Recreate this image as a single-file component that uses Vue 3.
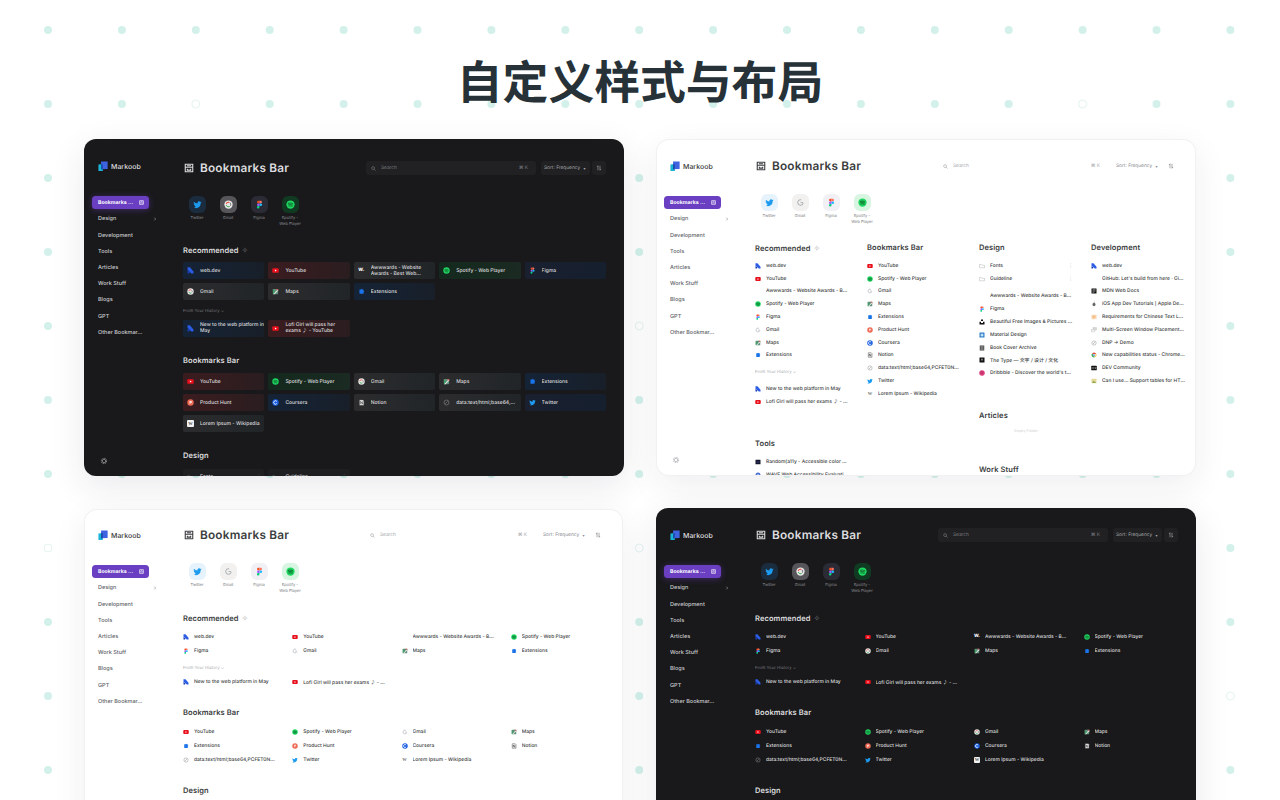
<script setup>
const W = 'Awwwards - Website Awards - Best Web Design Inspiration'
const it = {
  web: { i: 'web', t: 'web.dev', c: 'blue' },
  yt: { i: 'yt', t: 'YouTube', c: 'red' },
  aww: { i: 'aww', t: W, c: 'grey', two: true },
  spot: { i: 'spot', t: 'Spotify - Web Player', c: 'green' },
  fig: { i: 'fig', t: 'Figma', c: 'navy' },
  gmail: { i: 'gmail', t: 'Gmail', c: 'grey' },
  maps: { i: 'maps', t: 'Maps', c: 'grey' },
  ext: { i: 'ext', t: 'Extensions', c: 'blue' },
  ph: { i: 'ph', t: 'Product Hunt', c: 'red' },
  cou: { i: 'cou', t: 'Coursera', c: 'blue' },
  not: { i: 'not', t: 'Notion', c: 'grey' },
  data: { i: 'data', t: 'data:text/html;base64,PCFET0NUWVBFIGh0bWw+', c: 'grey' },
  tw: { i: 'tw', t: 'Twitter', c: 'navy' },
  wiki: { i: 'wiki', t: 'Lorem Ipsum - Wikipedia', c: 'grey' },
  nw: { i: 'web', t: 'New to the web platform in May', c: 'blue', two: true },
  lofi: { i: 'yt', t: 'Lofi Girl will pass her exams ♪ - YouTube', c: 'red', two: true },
  fonts: { i: 'folder', t: 'Fonts', more: true, c: 'plain' },
  guide: { i: 'folder', t: 'Guideline', more: true, c: 'plain' }
}
const s = (i, t) => ({ i, t })
const recItems = [it.web, it.yt, it.aww, it.spot, it.fig, it.gmail, it.maps, it.ext]
const barItems = [it.yt, it.spot, it.gmail, it.maps, it.ext, it.ph, it.cou, it.not, it.data, it.tw, it.wiki]
const hist = [it.nw, it.lofi]
const flow = [
  { title: 'Recommended', spark: true, items: recItems, hist },
  { title: 'Bookmarks Bar', items: barItems },
  { title: 'Design', items: [it.fonts, it.guide] }
]
const columns = [
  [
    { title: 'Recommended', spark: true, items: recItems, hist },
    { title: 'Tools', items: [s('rand', 'Random(a11y - Accessible color generator'), s('wave', 'WAVE Web Accessibility Evaluation Tool')] }
  ],
  [{ title: 'Bookmarks Bar', items: barItems }],
  [
    {
      title: 'Design',
      items: [it.fonts, { ...it.guide, sep: true }, s('aww', W), s('fig', 'Figma'), s('uns', 'Beautiful Free Images & Pictures | Unsplash'), s('mat', 'Material Design'), s('book', 'Book Cover Archive'), s('type', 'The Type — 文字 / 设计 / 文化'), s('dri', "Dribbble - Discover the world's top designers")]
    },
    { title: 'Articles', empty: true, items: [] },
    { title: 'Work Stuff', items: [] }
  ],
  [
    {
      title: 'Development',
      items: [s('web', 'web.dev'), s('blank', "GitHub: Let's build from here · GitHub"), s('mdn', 'MDN Web Docs'), s('ios', 'iOS App Dev Tutorials | Apple Developer'), s('req', 'Requirements for Chinese Text Layout'), s('multi', 'Multi-Screen Window Placement API'), s('data', 'DNP → Demo'), s('chr', 'New capabilities status - Chrome Developers'), s('dev', 'DEV Community'), s('can', 'Can I use... Support tables for HTML5')]
    }
  ]
]
const nav = ['Design', 'Development', 'Tools', 'Articles', 'Work Stuff', 'Blogs', 'GPT', 'Other Bookmar…']
const sites = [
  { i: 'tw', t: 'Twitter', c: 'st-tw' },
  { i: 'gmail', t: 'Gmail', c: 'st-gm' },
  { i: 'fig', t: 'Figma', c: 'st-fg' },
  { i: 'spot', t: 'Spotify - Web Player', c: 'st-sp' }
]
const cards = [
  { id: 'c1', theme: 'dark', mode: 'tile' },
  { id: 'c2', theme: 'light', mode: 'cols' },
  { id: 'c3', theme: 'light', mode: 'list' },
  { id: 'c4', theme: 'dark', mode: 'list' }
]
const icon = (name, theme) => (theme === 'dark' && name === 'gmail' ? '#gmail-d' : `#${name}`)
const isGlyph = (name) => name === 'aww' || name === 'wiki'
const glyphText = (name, theme) => {
  if (name === 'wiki') return 'W'
  return theme === 'dark' ? 'W.' : ''
}
const rings = ['2,1', '14,1', '8,4', '0,7', '8,7', '16,9']
const dots = []
for (let r = 0; r < 11; r++) {
  for (let c = 0; c < 17; c++) {
    dots.push({ x: 48 + c * 73.9, y: 30 + r * 74, ring: rings.includes(`${c},${r}`) })
  }
}
</script>

<template>
  <div class="page">
    <svg class="dots" width="1280" height="800" aria-hidden="true">
      <circle v-for="(d, n) in dots" :key="n" :cx="d.x" :cy="d.y" r="4" :class="d.ring ? 'ring' : 'dot'" />
    </svg>

    <svg class="defs" aria-hidden="true">
      <symbol id="logo" viewBox="0 0 24 24">
        <path d="M1 8l10-1v16H1z" fill="#19b4d6" />
        <path d="M7 1h15v17l-15 1z" fill="#3f63e0" />
        <path d="M7 7.400l4-.4v12l-4 .2z" fill="#164fa8" />
      </symbol>
      <symbol id="blank" viewBox="0 0 24 24"></symbol>
      <symbol id="web" viewBox="0 0 24 24">
        <path d="M2 1h8l12 14v7h-7L2 9z" fill="#2a5ce6" />
        <path d="M2 12l8 4-2 6H2z" fill="#1a3fb5" />
      </symbol>
      <symbol id="yt" viewBox="0 0 24 24">
        <rect x="1" y="4" width="22" height="16" rx="4" fill="#e8101c" />
        <path d="M10 8.500v7l6-3.500z" fill="#fff" />
      </symbol>
      <symbol id="spot" viewBox="0 0 24 24">
        <circle cx="12" cy="12" r="11" fill="#1ed760" />
        <path d="M6 9c4-1.300 8-1 12 1M7 12.500c3.500-1 7-.7 10 1M8 16c2.500-.7 5.500-.5 8 .8" fill="none" stroke="#0b3a1c" stroke-width="1.800" stroke-linecap="round" />
      </symbol>
      <symbol id="fig" viewBox="0 0 24 24">
        <path d="M12 2H9a3.500 3.500 0 0 0 0 7h3z" fill="#f24e1e" />
        <path d="M12 2h3a3.500 3.500 0 0 1 0 7h-3z" fill="#ff7262" />
        <path d="M12 9H9a3.500 3.500 0 0 0 0 7h3z" fill="#a259ff" />
        <circle cx="15.500" cy="12.500" r="3.500" fill="#1abcfe" />
        <path d="M9 16h3v3.500A3.500 3.500 0 1 1 9 16z" fill="#0acf83" />
      </symbol>
      <symbol id="gmail" viewBox="0 0 24 24">
        <circle cx="12" cy="12" r="7.500" fill="none" stroke="#9aa0a6" stroke-width="2" stroke-dasharray="35 12" transform="rotate(10 12 12)" />
        <path d="M12 12h7" stroke="#9aa0a6" stroke-width="2" />
      </symbol>
      <symbol id="gmail-d" viewBox="0 0 24 24">
        <circle cx="12" cy="12" r="11" fill="#e8e8e8" />
        <circle cx="12" cy="12" r="6" fill="none" stroke="#ea4335" stroke-width="2.500" stroke-dasharray="10 28" transform="rotate(190 12 12)" />
        <circle cx="12" cy="12" r="6" fill="none" stroke="#34a853" stroke-width="2.500" stroke-dasharray="10 28" transform="rotate(60 12 12)" />
        <circle cx="12" cy="12" r="6" fill="none" stroke="#777" stroke-width="2.500" stroke-dasharray="8 30" transform="rotate(-50 12 12)" />
      </symbol>
      <symbol id="maps" viewBox="0 0 24 24">
        <rect x="3" y="3" width="18" height="18" rx="2" fill="#5f8f7a" />
        <path d="M3 21L21 3v6L9 21z" fill="#d9dde0" />
        <path d="M13 3h8v6z" fill="#d9534a" />
        <path d="M3 5l8 8-8 8z" fill="#3f9f63" />
      </symbol>
      <symbol id="ext" viewBox="0 0 24 24">
        <path d="M5 5h6c0-3 4-3 4 0h4v5c3 0 3 4 0 4v6H5z" fill="#1a73e8" />
      </symbol>
      <symbol id="ph" viewBox="0 0 24 24">
        <circle cx="12" cy="12" r="11" fill="#ef6a55" />
        <path d="M9 7h4.500a3.200 3.200 0 0 1 0 6.400H11.200V17H9zM11.200 9v2.400h2.200a1.200 1.200 0 0 0 0-2.400z" fill="#fff" />
      </symbol>
      <symbol id="cou" viewBox="0 0 24 24">
        <circle cx="12" cy="12" r="11" fill="#1a5fe0" />
        <path d="M16.500 8.200a6 6 0 1 0 0 7.600" fill="none" stroke="#fff" stroke-width="3" />
      </symbol>
      <symbol id="not" viewBox="0 0 24 24">
        <path d="M5 3h12l3 3v15H5z" fill="#f2f2f2" stroke="#555" stroke-width="2" />
        <path d="M9 8v9M15 8v9M9 8l6 9" stroke="#333" stroke-width="2" fill="none" />
      </symbol>
      <symbol id="data" viewBox="0 0 24 24">
        <circle cx="12" cy="12" r="8.500" fill="none" stroke="#8a8d91" stroke-width="2" />
        <path d="M8 16l8-8" stroke="#8a8d91" stroke-width="2" />
      </symbol>
      <symbol id="tw" viewBox="0 0 24 24">
        <path d="M23 5.900c-.8.400-1.700.600-2.600.700a4.500 4.500 0 0 0 2-2.500c-.9.500-1.900.900-2.900 1.100a4.500 4.500 0 0 0-7.700 4.100A12.800 12.800 0 0 1 2.500 4.600a4.500 4.500 0 0 0 1.400 6c-.7 0-1.400-.2-2-.6v.1a4.500 4.500 0 0 0 3.600 4.400c-.7.200-1.400.2-2 .1a4.500 4.500 0 0 0 4.200 3.100A9 9 0 0 1 1 19.600a12.800 12.800 0 0 0 19.700-11.300c.9-.6 1.700-1.400 2.300-2.400z" fill="#1d9bf0" />
      </symbol>
      <symbol id="folder" viewBox="0 0 24 24">
        <path d="M2 6h7l2 3h11v10H2z" fill="none" stroke="currentColor" stroke-width="1.800" />
      </symbol>
      <symbol id="rand" viewBox="0 0 24 24">
        <rect x="2" y="3" width="20" height="18" rx="1" fill="#14162b" />
        <path d="M6 12h12" stroke="#5566cc" stroke-width="2" />
      </symbol>
      <symbol id="wave" viewBox="0 0 24 24">
        <circle cx="12" cy="12" r="10" fill="#4a6fd0" />
        <circle cx="12" cy="12" r="4.500" fill="#a9bdf0" />
      </symbol>
      <symbol id="uns" viewBox="0 0 24 24">
        <path d="M8 2h8v6H8zM2 11h6v5h8v-5h6v11H2z" fill="#111" />
      </symbol>
      <symbol id="mat" viewBox="0 0 24 24">
        <rect x="2" y="2" width="20" height="20" rx="2" fill="#2f7fc8" />
        <circle cx="12" cy="12" r="6" fill="#bfe0f5" />
      </symbol>
      <symbol id="book" viewBox="0 0 24 24">
        <rect x="3" y="2" width="18" height="20" fill="#444" />
        <path d="M6 7h12M6 12h12M6 17h12" stroke="#ddd" stroke-width="2" />
      </symbol>
      <symbol id="type" viewBox="0 0 24 24">
        <rect x="2" y="2" width="20" height="20" rx="1" fill="#111" />
        <path d="M8 9h8M12 9v7" stroke="#eee" stroke-width="2" />
      </symbol>
      <symbol id="dri" viewBox="0 0 24 24">
        <circle cx="12" cy="12" r="11" fill="#e0407f" />
        <path d="M4 9c6 1 12 0 15-4M8 3c3 5 6 12 6 19M3 16c4-4 11-5 18-3" stroke="#a82a5e" stroke-width="1.300" fill="none" />
      </symbol>
      <symbol id="mdn" viewBox="0 0 24 24">
        <rect x="2" y="2" width="20" height="20" fill="#111" />
        <path d="M6 7h12M6 12h12M6 17h7" stroke="#eee" stroke-width="2" />
      </symbol>
      <symbol id="ios" viewBox="0 0 24 24">
        <ellipse cx="12" cy="14" rx="6" ry="7" fill="#666" />
        <path d="M12 7c0-2 1-4 3-4" stroke="#666" stroke-width="2" fill="none" />
      </symbol>
      <symbol id="req" viewBox="0 0 24 24">
        <rect x="2" y="3" width="20" height="18" rx="2" fill="#fbd7b5" />
        <path d="M6 9h12M6 14h9" stroke="#ef9a4a" stroke-width="2" />
      </symbol>
      <symbol id="multi" viewBox="0 0 24 24">
        <rect x="8" y="2" width="14" height="11" fill="#d5d5d5" stroke="#aaa" />
        <rect x="2" y="9" width="13" height="11" fill="#eee" stroke="#aaa" />
      </symbol>
      <symbol id="chr" viewBox="0 0 24 24">
        <path d="M12 2a10 10 0 0 1 9 6H12a4 4 0 0 0-4 2L5 5a10 10 0 0 1 7-3z" fill="#e64a3a" />
        <path d="M21 8a10 10 0 0 1-8 14l4-7a4 4 0 0 0-1-7z" fill="#f5c02c" />
        <path d="M5 5l4 8a4 4 0 0 0 8 2l-4 7A10 10 0 0 1 5 5z" fill="#33a852" />
        <circle cx="12" cy="12" r="3.500" fill="#4285f4" />
      </symbol>
      <symbol id="dev" viewBox="0 0 24 24">
        <rect x="1" y="3" width="22" height="18" rx="2" fill="#111" />
        <path d="M5 9v6M9 9v6M11 9h2M11 15h2M16 9l1.500 6L19 9" stroke="#fff" stroke-width="1.500" fill="none" />
      </symbol>
      <symbol id="can" viewBox="0 0 24 24">
        <rect x="2" y="3" width="20" height="18" rx="2" fill="#e5d99a" />
        <path d="M4 19l6-8 4 5 2-2 5 5z" fill="#7fa34a" />
      </symbol>
    </svg>

    <h1 class="headline">自定义样式与布局</h1>

    <div class="board">
      <section v-for="card in cards" :key="card.id" class="card" :class="[card.id, card.theme]">
        <aside class="side">
          <div class="brand">
            <svg class="brand-ic"><use href="#logo" /></svg>
            <span>Markoob</span>
          </div>
          <div class="pill">
            <span>Bookmarks …</span>
            <svg class="pill-ic" viewBox="0 0 24 24"><path d="M3 3h18v18H3zM3 14h18M8 8h8" fill="none" stroke="currentColor" stroke-width="3" /></svg>
          </div>
          <div class="nav">
            <div v-for="(n, x) in nav" :key="n" class="nav-row">
              <span>{{ n }}</span>
              <svg v-if="x === 0" class="chev" viewBox="0 0 24 24"><path d="M8 4l8 8-8 8" fill="none" stroke="currentColor" stroke-width="3" /></svg>
            </div>
          </div>
          <div class="gear">
            <svg viewBox="0 0 24 24"><circle cx="12" cy="12" r="7.500" fill="none" stroke="currentColor" stroke-width="4" stroke-dasharray="3.500 2.400" /><circle cx="12" cy="12" r="5" fill="none" stroke="currentColor" stroke-width="3" /></svg>
          </div>
        </aside>

        <div class="main">
          <header class="head">
            <svg class="head-ic" viewBox="0 0 24 24"><path d="M3 3h18v18H3zM3 10h18M8 14v3h8v-3M7 6.500h10" fill="none" stroke="currentColor" stroke-width="2.600" /></svg>
            <h2 class="head-title">Bookmarks Bar</h2>
            <div class="search">
              <svg class="search-ic" viewBox="0 0 24 24"><circle cx="10" cy="10" r="7" fill="none" stroke="currentColor" stroke-width="3" /><path d="M15 15l7 7" stroke="currentColor" stroke-width="3" /></svg>
              <span class="search-ph">Search</span>
              <span class="search-key">⌘ K</span>
            </div>
            <div class="sort">Sort: Frequency <span class="sort-caret">▾</span></div>
            <div class="order">
              <svg viewBox="0 0 24 24"><path d="M8 3v18M4 8l4-5M16 21V3M20 16l-4 5" fill="none" stroke="currentColor" stroke-width="2.500" /></svg>
            </div>
          </header>

          <div class="sites">
            <div v-for="st in sites" :key="st.t" class="site">
              <div class="site-box" :class="st.c"><svg class="site-ic"><use :href="icon(st.i, card.theme)" /></svg></div>
              <div class="site-label">{{ st.t }}</div>
            </div>
          </div>

          <div v-if="card.mode === 'cols'" class="cols">
            <div v-for="(col, ci) in columns" :key="ci" class="col">
              <div v-for="sec in col" :key="sec.title" class="sec">
                <h3 class="sec-title">{{ sec.title }}<span v-if="sec.spark" class="spark">✧</span></h3>
                <div v-if="sec.items.length" class="rows">
                  <div v-for="item in sec.items" :key="item.t" class="row" :class="{ sep: item.sep }">
                    <span v-if="isGlyph(item.i)" class="glyph" :class="'g-' + item.i">{{ glyphText(item.i, card.theme) }}</span>
                    <svg v-else class="row-ic"><use :href="icon(item.i, card.theme)" /></svg>
                    <span class="row-t">{{ item.t }}</span>
                    <span v-if="item.more" class="more">⋮</span>
                  </div>
                </div>
                <div v-if="sec.empty" class="empty">Empty Folder</div>
                <template v-if="sec.hist">
                  <div class="hist">From Your History ⌄</div>
                  <div class="rows">
                    <div v-for="item in sec.hist" :key="item.t" class="row">
                      <svg class="row-ic"><use :href="icon(item.i, card.theme)" /></svg>
                      <span class="row-t">{{ item.t }}</span>
                    </div>
                  </div>
                </template>
              </div>
            </div>
          </div>

          <template v-else>
            <div v-for="sec in flow" :key="sec.title" class="sec">
              <h3 class="sec-title">{{ sec.title }}<span v-if="sec.spark" class="spark">✧</span></h3>
              <div :class="card.mode === 'tile' ? 'tiles' : 'list'">
                <div v-for="item in sec.items" :key="item.t" class="row" :class="[card.mode === 'tile' ? 'tint-' + item.c : '']">
                  <span v-if="isGlyph(item.i)" class="glyph" :class="'g-' + item.i">{{ glyphText(item.i, card.theme) }}</span>
                  <svg v-else class="row-ic"><use :href="icon(item.i, card.theme)" /></svg>
                  <span class="row-t" :class="{ two: item.two }">{{ item.t }}</span>
                  <span v-if="item.more" class="more">⋮</span>
                </div>
              </div>
              <template v-if="sec.hist">
                <div class="hist">From Your History ⌄</div>
                <div :class="card.mode === 'tile' ? 'tiles' : 'list'">
                  <div v-for="item in sec.hist" :key="item.t" class="row" :class="[card.mode === 'tile' ? 'tint-' + item.c : '']">
                    <svg class="row-ic"><use :href="icon(item.i, card.theme)" /></svg>
                    <span class="row-t" :class="{ two: item.two }">{{ item.t }}</span>
                  </div>
                </div>
              </template>
            </div>
          </template>
        </div>
      </section>
    </div>
  </div>
</template>

<style>
html, body { margin: 0; background: #fff; }
</style>

<style scoped>
.page {
  position: relative;
  height: 800px;
  overflow: hidden;
  padding-top: 50px;
  box-sizing: border-box;
  background: #fff;
  font-family: Inter, "Noto Sans CJK SC", sans-serif;
  text-rendering: geometricPrecision;
}
.dots { position: absolute; left: 0; top: 0; }
.dot { fill: #d3f1ea; }
.ring { fill: #fff; stroke: #e4f3f0; stroke-width: 1; }
.defs { position: absolute; width: 0; height: 0; }

.headline {
  position: relative;
  margin: 0 0 29px;
  height: 60px;
  line-height: 60px;
  text-align: center;
  font-family: "Noto Sans CJK SC", sans-serif;
  font-size: 45.800px;
  font-weight: 700;
  color: #263238;
}
.board {
  position: relative;
  display: grid;
  grid-template-columns: 540px 540px;
  grid-auto-rows: 337px;
  gap: 32px;
  justify-content: center;
}
.card {
  display: flex;
  min-width: 0;
  overflow: hidden;
  border-radius: 12px;
  box-shadow: 0 10px 34px rgba(40, 40, 70, 0.1);
}
.dark { background: #19191b; color: #dcdcde; --muted: #77787c; --field: #212124; }
.light { background: #fff; color: #3b3d40; --muted: #a9abaf; --field: #fff; }
.c1 { --st: 21px; --mt: 22px; --sm: 20.500px; --ss: 18px; }
.c2 { margin: 1px; --st: 20px; --mt: 19px; --sm: 20.500px; --ss: 18.500px; }
.c3 { margin: 2px 2px 0 1px; --st: 19px; --mt: 18px; --sm: 20.500px; --ss: 19px; }
.c4 { --st: 21px; --mt: 20px; --sm: 20.500px; --ss: 19px; }
.light { box-shadow: 0 0 0 1px #f1f1f3, 0 10px 34px rgba(40, 40, 70, 0.08); }

.side {
  flex: none;
  width: 99px;
  box-sizing: border-box;
  padding: var(--st) 0 11px 8px;
  display: flex;
  flex-direction: column;
}
.light .side { width: 98px; padding-left: 7px; }
.brand {
  display: flex;
  align-items: center;
  gap: 2.500px;
  height: 12px;
  padding-left: 6px;
  margin-bottom: 24px;
  font-size: 7px;
  font-weight: 500;
}
.brand-ic { width: 10.500px; height: 10.500px; flex: none; }
.pill {
  width: 57px;
  height: 13px;
  box-sizing: border-box;
  padding: 0 5px 0 6px;
  display: flex;
  align-items: center;
  justify-content: space-between;
  border-radius: 3.500px;
  background: #6a3fc2;
  color: #fff;
  font-size: 5.200px;
  font-weight: 700;
}
.dark .pill { box-shadow: 0 1px 6px rgba(106, 63, 194, 0.45); }
.pill-ic { width: 5px; height: 5px; }
.nav { display: flex; flex-direction: column; margin-top: 2.300px; }
.nav-row {
  width: 65px;
  height: 16.200px;
  box-sizing: border-box;
  padding: 0 0 0 6px;
  display: flex;
  align-items: center;
  justify-content: space-between;
  font-size: 5.500px;
  font-weight: 500;
}
.dark .nav-row { color: #c8c9cc; }
.light .nav-row { color: #63656a; }
.chev { width: 4px; height: 4px; }
.gear { margin-top: auto; margin-left: 8px; width: 8px; height: 8px; color: #77787c; }
.light .gear { color: #c4c5c8; }
.gear svg { display: block; width: 8px; height: 8px; }

.main {
  flex: 1;
  min-width: 0;
  box-sizing: border-box;
  padding: var(--mt) 18px 0 0;
}
.light .main { padding-right: 17px; }
.head { display: flex; align-items: center; height: 14px; }
.head-ic { width: 10px; height: 10px; margin-left: 0.500px; flex: none; }
.head-title {
  margin: 0 0 0 6.500px;
  font-size: 11.800px;
  font-weight: 600;
  letter-spacing: 0.2px;
  white-space: nowrap;
}
.search {
  margin-left: auto;
  width: 170px;
  height: 14px;
  box-sizing: border-box;
  padding: 0 8px 0 5px;
  display: flex;
  align-items: center;
  border-radius: 3px;
  background: var(--field);
  font-size: 4.800px;
  color: var(--muted);
}
.search-ic { width: 5px; height: 5px; margin-right: 5px; flex: none; }
.search-key { margin-left: auto; }
.sort {
  margin-left: 5px;
  width: 49px;
  height: 14px;
  box-sizing: border-box;
  padding-left: 3px;
  display: flex;
  align-items: center;
  border-radius: 3px;
  background: var(--field);
  font-size: 4.800px;
  white-space: pre;
  color: #a6a7aa;
}
.light .sort { color: #888a8e; }
.sort-caret { margin-left: 2px; font-size: 4px; }
.order {
  margin-left: 2px;
  width: 14px;
  height: 14px;
  display: flex;
  align-items: center;
  justify-content: center;
  border-radius: 3px;
  background: var(--field);
  color: #a6a7aa;
}
.light .order { color: #777; }
.order svg { width: 6px; height: 6px; }

.sites { display: flex; margin: var(--sm) 0 0 -1.500px; height: 31px; }
.site { width: 31px; display: flex; flex-direction: column; align-items: center; }
.site-box {
  width: 17px;
  height: 17px;
  border-radius: 6px;
  display: flex;
  align-items: center;
  justify-content: center;
}
.site-ic { width: 9px; height: 9px; }
.site-label {
  width: 25px;
  margin-top: 2px;
  font-size: 4px;
  line-height: 6px;
  text-align: center;
  color: #8f9094;
}
.light .site-label { color: #77797d; }
.dark .st-tw { background: #1a2c3e; }
.dark .st-gm { background: #56565a; }
.dark .st-fg { background: #2b2b36; }
.dark .st-sp { background: #103a21; }
.light .st-tw { background: #e6f3fd; }
.light .st-gm { background: #f3f1ef; }
.light .st-fg { background: #f0f0f5; }
.light .st-sp { background: #d8f5e2; }

.sec { margin-top: 19px; }
.sites + .sec { margin-top: var(--ss); }
.sec-title {
  margin: 0;
  height: 10px;
  line-height: 10px;
  font-size: 7.500px;
  font-weight: 600;
  letter-spacing: 0.1px;
}
.spark { margin-left: 3px; font-size: 8px; font-weight: 400; color: var(--muted); }
.hist { height: 7px; line-height: 7px; font-size: 4.300px; color: var(--muted); white-space: pre; }

.tiles {
  display: grid;
  grid-template-columns: repeat(5, 1fr);
  gap: 4px;
  margin-top: 7.500px;
}
.tiles + .hist { margin-top: 7.500px; }
.hist + .tiles { margin-top: 5px; }
.tiles .row {
  height: 17px;
  box-sizing: border-box;
  padding: 0 3px 0 4px;
  border-radius: 2px;
}
.tiles .tint-blue { padding-right: 0; }
.tiles .row-ic, .tiles .glyph { width: 7px; height: 7px; line-height: 7px; }
.tiles .row-t { margin-left: 6px; font-size: 5px; line-height: 6px; }
.tiles .two {
  display: -webkit-box;
  -webkit-box-orient: vertical;
  -webkit-line-clamp: 2;
  white-space: normal;
}
.tint-blue { background: linear-gradient(90deg, #152336, #181f29); }
.tint-red { background: linear-gradient(90deg, #3b1c1f, #2a1d20); }
.tint-grey { background: linear-gradient(90deg, #2c2c2e, #212528); }
.tint-green { background: linear-gradient(90deg, #14291e, #1b2a22); }
.tint-navy { background: linear-gradient(90deg, #1a2030, #151f2d); }
.tint-plain { background: #1f1f22; }

.list {
  display: grid;
  grid-template-columns: repeat(4, 1fr);
  column-gap: 15px;
  margin-top: 7.500px;
}
.list + .hist { margin-top: 7.200px; }
.hist + .list { margin-top: 3.500px; }
.list .row { height: 13.800px; }

.row { display: flex; align-items: center; min-width: 0; }
.row-ic { flex: none; width: 6px; height: 6px; color: var(--muted); }
.glyph {
  flex: none;
  width: 6px;
  height: 6px;
  line-height: 6px;
  text-align: center;
  font-size: 4.500px;
  font-weight: 800;
  white-space: nowrap;
}
.g-aww { color: #fff; }
.g-wiki { font-family: "Liberation Serif", serif; color: #777; }
.dark .g-wiki { background: #f1f1f1; border-radius: 1px; color: #555; }
.row-t {
  flex: 1;
  min-width: 0;
  margin-left: 5px;
  font-size: 4.950px;
  font-weight: 500;
  white-space: nowrap;
  overflow: hidden;
  text-overflow: ellipsis;
}
.more { flex: none; font-size: 5px; color: var(--muted); }

.cols {
  display: grid;
  grid-template-columns: repeat(4, 94px);
  column-gap: 18px;
  margin-top: 18.500px;
}
.cols .sec { margin-top: 31.500px; }
.cols .sec:first-child { margin-top: 0; }
.rows { margin-top: 6.500px; }
.rows .row { height: 12.800px; }
.rows .sep { margin-bottom: 5px; }
.cols .hist { margin: 7px 0 2px; }
.empty { margin-top: 6.500px; height: 6px; line-height: 6px; text-align: center; font-size: 3.800px; color: #cfd0d3; }
</style>
